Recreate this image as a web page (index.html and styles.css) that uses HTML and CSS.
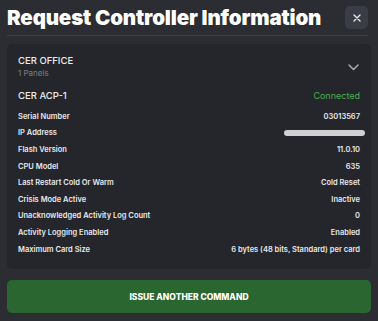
FILE: index.html
```html
<!DOCTYPE html>
<html>
<head>
<meta charset="utf-8">
<link rel="stylesheet" href="styles.css">
</head>
<body>
<div class="modal">
  <header class="head">
    <h1 class="title">Request Controller Information</h1>
    <button class="close" aria-label="Close">
      <svg width="10" height="10" viewBox="0 0 10 10"><path d="M2 2L8 8M8 2L2 8" stroke="#e8e8e8" stroke-width="1.4" stroke-linecap="round"/></svg>
    </button>
  </header>
  <section class="card">
    <div class="group">
      <div class="group-text">
        <div class="group-name">CER OFFICE</div>
        <div class="group-sub">1 Panels</div>
      </div>
      <svg class="chev" width="11" height="7" viewBox="0 0 11 7"><path d="M1 1L5.5 5.5L10 1" fill="none" stroke="#a9abb0" stroke-width="1.5" stroke-linecap="round" stroke-linejoin="round"/></svg>
    </div>
    <div class="panel">
      <span class="panel-name">CER ACP-1</span>
      <span class="status">Connected</span>
    </div>
    <dl class="rows">
      <div class="row"><dt>Serial Number</dt><dd>03013567</dd></div>
      <div class="row"><dt>IP Address</dt><dd><span class="redact"></span></dd></div>
      <div class="row"><dt>Flash Version</dt><dd>11.0.10</dd></div>
      <div class="row"><dt>CPU Model</dt><dd>635</dd></div>
      <div class="row"><dt>Last Restart Cold Or Warm</dt><dd>Cold Reset</dd></div>
      <div class="row"><dt>Crisis Mode Active</dt><dd>Inactive</dd></div>
      <div class="row"><dt>Unacknowledged Activity Log Count</dt><dd>0</dd></div>
      <div class="row"><dt>Activity Logging Enabled</dt><dd>Enabled</dd></div>
      <div class="row"><dt>Maximum Card Size</dt><dd>6 bytes (48 bits, Standard) per card</dd></div>
    </dl>
  </section>
  <button class="action">ISSUE ANOTHER COMMAND</button>
</div>
</body>
</html>
```
FILE: styles.css
```css
html, body {
  margin: 0;
  padding: 0;
  background: #2b2d33;
}
body {
  font-family: Inter, "Noto Sans", sans-serif;
  color: #e6e6e8;
}
.modal {
  width: 378px;
  height: 321px;
  box-sizing: border-box;
  padding: 6px 7px 0 7px;
  display: flex;
  flex-direction: column;
}
.head {
  display: flex;
  align-items: center;
  justify-content: space-between;
  height: 23px;
  padding-bottom: 6px;
  border-bottom: 1px solid #3c3f46;
  margin-right: 3px;
}
.title {
  margin: 0;
  font-size: 20.5px;
  font-weight: 900;
  color: #ffffff;
  line-height: 23px;
  letter-spacing: -0.15px;
}
.close {
  width: 23px;
  height: 23px;
  border: none;
  border-radius: 5px;
  background: #3a3d45;
  display: flex;
  align-items: center;
  justify-content: center;
  padding: 0;
}
.card {
  margin-top: 8px;
  background: #24262b;
  border-radius: 5px;
  padding: 10px 11px 14px 11px;
  height: 225px;
  box-sizing: border-box;
}
.group {
  display: flex;
  align-items: center;
  justify-content: space-between;
}
.group-name {
  font-size: 9.5px;
  font-weight: 500;
  color: #ececee;
  line-height: 14px;
}
.group-sub {
  font-size: 8px;
  color: #7c7f86;
  line-height: 10px;
}
.chev {
  margin-right: 1px;
  margin-top: 2px;
}
.panel {
  display: flex;
  justify-content: space-between;
  align-items: center;
  margin-top: 11px;
  line-height: 14px;
}
.panel-name {
  font-size: 9.5px;
  font-weight: 500;
  color: #ececee;
}
.status {
  font-size: 9px;
  color: #4caf50;
}
.rows {
  margin: 5px 0 0 0;
}
.row {
  display: flex;
  justify-content: space-between;
  align-items: center;
  height: 16.6px;
  font-size: 7.5px;
  font-weight: 600;
  color: #e8e9eb;
}
.row dt, .row dd {
  margin: 0;
}
.redact {
  display: inline-block;
  width: 81px;
  height: 6px;
  border-radius: 3px;
  background: #cfd0d2;
  vertical-align: middle;
  margin-right: -5px;
}
.action {
  margin-top: 11px;
  height: 33px;
  border: none;
  border-radius: 5px;
  background: #2a6630;
  color: #ffffff;
  font-family: Inter, "Noto Sans", sans-serif;
  font-size: 8.5px;
  font-weight: 800;
}
```
